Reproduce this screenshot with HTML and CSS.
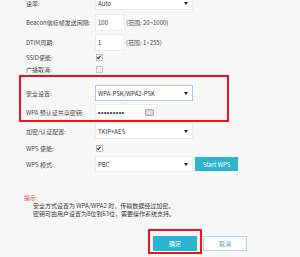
FILE: index.html
```html
<!DOCTYPE html>
<html lang="zh-CN">
<head>
    <meta charset="UTF-8">
    <meta name="viewport" content="width=device-width, initial-scale=1.0">
    <title>无线安全设置</title>
    <link rel="stylesheet" href="styles.css">
</head>
<body>
    <div class="page">
        <div class="row r-rate">
            <span class="label">速率:</span>
            <div class="select"><span>Auto</span><i class="arrow"></i></div>
        </div>
        <div class="row r-input">
            <span class="label">Beacon信标帧发送间隔:</span>
            <div class="input short">100</div>
            <span class="range">(范围: 20~1000)</span>
        </div>
        <div class="row r-input">
            <span class="label">DTIM周期:</span>
            <div class="input short">1</div>
            <span class="range">(范围: 1~255)</span>
        </div>
        <div class="row r-check">
            <span class="label">SSID使能:</span>
            <span class="check on"></span>
        </div>
        <div class="row r-check2">
            <span class="label">广播取消:</span>
            <span class="check"></span>
        </div>

        <div class="mark-box">
            <div class="row r-sec">
                <span class="label">安全设置:</span>
                <div class="select focus"><span>WPA-PSK/WPA2-PSK</span><i class="arrow"></i></div>
            </div>
            <div class="row r-key">
                <span class="label">WPA 预认证共享密钥:</span>
                <div class="input pass">
                    <span class="dots">•••••••••</span>
                    <span class="kbd"></span>
                </div>
            </div>
        </div>

        <div class="row r-enc">
            <span class="label">加密/认证配置:</span>
            <div class="select"><span>TKIP+AES</span><i class="arrow"></i></div>
        </div>
        <div class="row r-wps">
            <span class="label">WPS 使能:</span>
            <span class="check on"></span>
        </div>
        <div class="row r-mode">
            <span class="label">WPS 模式:</span>
            <div class="select"><span>PBC</span><i class="arrow"></i></div>
            <button class="btn-wps">Start WPS</button>
        </div>

        <div class="hint">
            <p class="hint-title">提示:</p>
            <p class="hint-line">安全方式设置为 WPA/WPA2 时，传输数据经过加密。</p>
            <p class="hint-line">密钥可由用户设置为8位到63位，需要操作系统支持。</p>
        </div>

        <div class="actions">
            <div class="mark-btn">
                <button class="btn-ok">确定</button>
            </div>
            <button class="btn-cancel">取消</button>
        </div>
    </div>
</body>
</html>
```

FILE: styles.css
```css
body {
    margin: 0;
    background-color: #f7f7f7;
    font-family: "Noto Sans CJK SC", "Noto Sans", sans-serif;
    font-size: 6px;
    color: #4a4a4a;
    overflow: hidden;
}
p {
    margin: 0;
}
.page {
    width: 300px;
    height: 257px;
    overflow: hidden;
}
.row {
    display: flex;
    align-items: center;
    padding-left: 26px;
}
.label {
    width: 69px;
    flex-shrink: 0;
    white-space: nowrap;
}
.r-rate {
    height: 14px;
    margin-top: -4px;
}
.r-input {
    height: 16px;
    margin-top: 4px;
}
.r-check {
    height: 12px;
    margin-top: 1px;
}
.r-check2 {
    height: 11px;
    margin-top: 1px;
}
.select {
    width: 98px;
    height: 16px;
    box-sizing: border-box;
    background-color: #fff;
    border: 1px solid #ececec;
    display: flex;
    align-items: center;
    justify-content: space-between;
    padding: 0 4px 0 2px;
    color: #333;
}
.r-rate .select {
    height: 14px;
}
.select.focus {
    border-color: #a9c7ee;
}
.arrow {
    width: 0;
    height: 0;
    border-left: 2px solid transparent;
    border-right: 2px solid transparent;
    border-top: 3px solid #222;
}
.input {
    height: 17px;
    box-sizing: border-box;
    background-color: #fff;
    border: 1px solid #ececec;
    display: flex;
    align-items: center;
    padding-left: 2px;
    color: #333;
}
.input.short {
    width: 30px;
}
.range {
    margin-left: 1px;
    white-space: nowrap;
}
.check {
    width: 5px;
    height: 5px;
    margin-left: 1px;
    border: 1px solid #c8c8c8;
    background-color: #f2f2f2;
    position: relative;
}
.check.on {
    border-color: #bbb;
    background-color: #fff;
}
.check.on::after {
    content: "";
    position: absolute;
    left: 1px;
    top: 0;
    width: 1px;
    height: 3px;
    border-right: 1px solid #222;
    border-bottom: 1px solid #222;
    transform: rotate(40deg);
}
.mark-box {
    margin-left: 19px;
    width: 210px;
    height: 47px;
    box-sizing: border-box;
    border: 2px solid #e8151f;
    padding-top: 8px;
}
.mark-box .row {
    padding-left: 5px;
}
.r-sec {
    height: 16px;
}
.r-key {
    height: 16px;
    margin-top: 3px;
}
.input.pass {
    width: 62px;
    height: 16px;
    justify-content: space-between;
    padding-right: 2px;
}
.dots {
    font-family: "Liberation Sans", sans-serif;
    letter-spacing: 0.5px;
    font-size: 7px;
    color: #222;
}
.kbd {
    width: 7px;
    height: 5px;
    border: 1px solid #aaa;
    border-radius: 1px;
    background-color: #ddd;
}
.r-enc {
    height: 16px;
    margin-top: 1px;
}
.r-wps {
    height: 12px;
    margin-top: 3px;
}
.r-mode {
    height: 16px;
    margin-top: 2px;
}
.btn-wps {
    margin-left: 2px;
    width: 43px;
    height: 14px;
    padding: 0;
    border: none;
    background-color: #2bb5cf;
    color: #fff;
    font-family: inherit;
    font-size: 6px;
}
.hint {
    margin-top: 22px;
    line-height: 8px;
}
.hint-title {
    padding-left: 24px;
    color: #e8383d;
}
.hint-line {
    padding-left: 33px;
    color: #3a3a3a;
}
.actions {
    display: flex;
    align-items: flex-start;
    margin-top: 11px;
    padding-left: 148px;
}
.mark-btn {
    border: 2px solid #e8151f;
    padding: 5px 3px 1px 3px;
}
.btn-ok, .btn-cancel {
    width: 44px;
    height: 15px;
    padding: 0;
    font-family: inherit;
    font-size: 6px;
}
.btn-ok {
    border: none;
    background-color: #2bb5cf;
    color: #fff;
}
.btn-cancel {
    margin-left: 1px;
    margin-top: 7px;
    border: 1px solid #a6dfea;
    background-color: #fff;
    color: #4aa9bb;
}
```
